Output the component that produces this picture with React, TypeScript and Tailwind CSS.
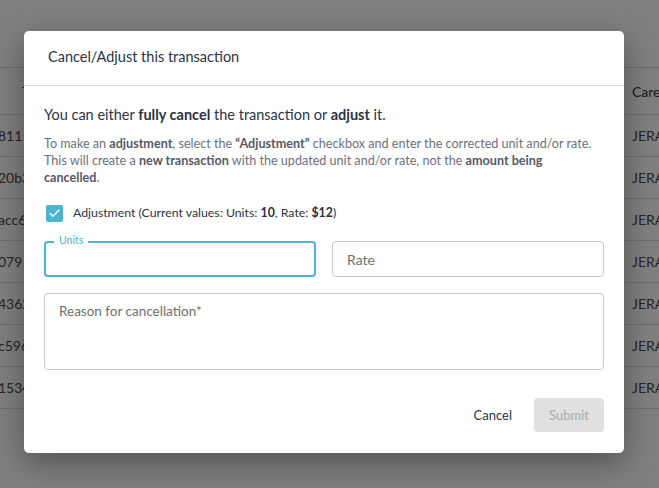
import { Check } from "lucide-react";

const ROWS = [
  { id: "811", carer: "JERA" },
  { id: "20b3", carer: "JERA" },
  { id: "acc6", carer: "JERA" },
  { id: "079", carer: "JERA" },
  { id: "4362", carer: "JERA" },
  { id: "c596", carer: "JERA" },
  { id: "1534", carer: "JERA" },
];

function BackgroundTable() {
  return (
    <div className="w-[659px] h-[488px] overflow-hidden bg-white text-[#4a4a4a] text-[14px]">
      <div className="h-[67px]" />
      <div className="border-t border-b border-[#dadada] h-[48px] flex items-center">
        <div className="w-[40px] relative h-full">
          <span className="absolute left-[22px] top-[19px] w-[18px] h-px bg-[#555]" />
        </div>
        <div className="flex-1" />
        <div className="w-[27px] text-[#333]">Carer</div>
      </div>
      {ROWS.map((r) => (
        <div key={r.id} className="h-[42px] border-b border-[#dadada] flex items-center">
          <div className="w-[60px] -ml-[2px]">{r.id}</div>
          <div className="flex-1" />
          <div className="w-[27px] overflow-hidden whitespace-nowrap">{r.carer}</div>
        </div>
      ))}
    </div>
  );
}

export default function App() {
  return (
    <div className="relative w-[659px] h-[488px] overflow-hidden font-['Lato',sans-serif]">
      <BackgroundTable />
      <div className="absolute inset-0 bg-black/50" />

      {/* Dialog */}
      <div className="absolute left-[24px] top-[31px] w-[600px] h-[422px] bg-white rounded-[5px] shadow-[0_10px_30px_rgba(0,0,0,0.35)] flex flex-col">
        <div className="h-[55px] px-6 pb-[3px] flex items-center border-b border-[#dcdcdc]">
          <h2 className="text-[14.5px] text-[#2c3345]">Cancel/Adjust this transaction</h2>
        </div>

        <div className="px-5 pt-[19px] flex-1 flex flex-col">
          <p className="text-[14.5px] text-[#2c3345] leading-[20px]">
            You can either <b>fully cancel</b> the transaction or <b>adjust</b> it.
          </p>
          <p className="mt-[10px] text-[12.6px] leading-[17px] text-[#6b7080]">
            To make an <b className="text-[#555a68]">adjustment</b>, select the{" "}
            <b className="text-[#555a68]">“Adjustment”</b> checkbox and enter the corrected unit and/or rate.
            <br />
            This will create a <b className="text-[#555a68]">new transaction</b> with the updated unit and/or
            rate, not the <b className="text-[#555a68]">amount being</b>
            <br />
            <b className="text-[#555a68]">cancelled</b>.
          </p>

          <label className="mt-[18px] flex items-center gap-[10px] pl-[2px]">
            <span className="w-[17px] h-[17px] rounded-[2px] bg-[#4bb4cf] flex items-center justify-center">
              <Check size={13} strokeWidth={2.5} className="text-white" />
            </span>
            <span className="text-[12.3px] text-[#2c3345]">
              Adjustment (Current values: Units: <b>10</b>, Rate: <b>$12</b>)
            </span>
          </label>

          <div className="mt-[19px] grid grid-cols-2 gap-4">
            <div className="relative h-[36px] rounded-[4px] border-2 border-[#4bb4cf]">
              <span className="absolute -top-[10px] left-[8px] px-[5px] bg-white text-[10.5px] leading-[14px] text-[#4bb4cf]">
                Units
              </span>
            </div>
            <div className="h-[36px] rounded-[4px] border border-[#c6c6c6] flex items-center px-[14px] text-[14px] text-[#6f6f6f]">
              Rate
            </div>
          </div>

          <div className="mt-[16px] h-[77px] rounded-[4px] border border-[#c6c6c6] px-[14px] pt-[7px] leading-[20px] text-[13.5px] text-[#6f6f6f]">
            Reason for cancellation*
          </div>

          <div className="mt-[28px] flex items-center justify-end gap-[22px]">
            <button className="text-[13px] text-[#2c3345]">Cancel</button>
            <button className="w-[70px] h-[34px] rounded-[4px] bg-[#e0e0e0] text-[13px] text-[#ababab]">
              Submit
            </button>
          </div>
        </div>
      </div>
    </div>
  );
}
